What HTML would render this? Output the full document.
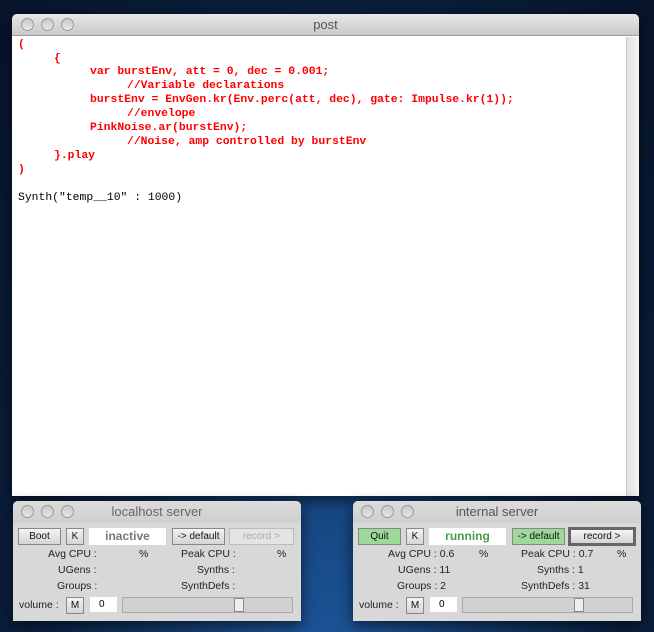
<!DOCTYPE html>
<html><head><style>
*{margin:0;padding:0;box-sizing:border-box}
body{width:654px;height:632px;overflow:hidden;position:relative;font-family:"Liberation Sans",sans-serif;
background:radial-gradient(ellipse at 50% 120%,#1f5fa8 0%,#123a6e 35%,#0b1f3d 65%,#07142a 100%);}
.win{position:absolute;background:#d8d8d8;border-radius:5px 5px 0 0;box-shadow:0 4px 14px rgba(0,0,0,.6)}
.tb{position:absolute;left:0;right:0;top:0;height:22px;border-radius:5px 5px 0 0;background:linear-gradient(#e8e8e8,#c9c9c9);border-bottom:1px solid #9a9a9a;text-align:center;font-size:13px;color:#555;line-height:22px}
.dot{position:absolute;top:4px;width:13px;height:13px;border-radius:50%;background:linear-gradient(#c8c8c8,#e8e8e8);border:1px solid #999}
.code{position:absolute;font-family:"Liberation Mono",monospace;font-size:11.4px;font-weight:bold;color:#f00;white-space:pre;line-height:14px}
.btn{position:absolute;height:17px;background:linear-gradient(#f4f4f4,#d4d4d4);border:1px solid #888;font-size:10px;text-align:center;line-height:15px;color:#111}
.lbl{position:absolute;font-size:10.5px;color:#222;white-space:pre}
</style></head><body>
<div class="win" style="left:12px;top:14px;width:627px;height:482px;background:#fff">
 <div class="tb">post</div>
 <div class="dot" style="left:9px"></div><div class="dot" style="left:29px"></div><div class="dot" style="left:49px"></div>
 <div style="position:absolute;right:0;top:23px;width:13px;bottom:0;background:linear-gradient(90deg,#e0e0e0,#f4f4f4);border-left:1px solid #ccc"></div>
</div>
<div class="code" style="left:18px;top:38px">(</div>
<div class="code" style="left:54px;top:52px">{</div>
<div class="code" style="left:90px;top:65px">var burstEnv, att = 0, dec = 0.001;</div>
<div class="code" style="left:127px;top:79px">//Variable declarations</div>
<div class="code" style="left:90px;top:93px">burstEnv = EnvGen.kr(Env.perc(att, dec), gate: Impulse.kr(1));</div>
<div class="code" style="left:127px;top:107px">//envelope</div>
<div class="code" style="left:90px;top:121px">PinkNoise.ar(burstEnv);</div>
<div class="code" style="left:127px;top:135px">//Noise, amp controlled by burstEnv</div>
<div class="code" style="left:54px;top:149px">}.play</div>
<div class="code" style="left:18px;top:163px">)</div>
<div class="code" style="left:18px;top:191px;color:#000;font-weight:normal">Synth("temp__10" : 1000)</div>

<!-- localhost -->
<div class="win" style="left:13px;top:501px;width:288px;height:120px">
 <div class="tb" style="background:linear-gradient(#dcdcdc,#cfcfcf);border-bottom:none;color:#666">localhost server</div>
 <div class="dot" style="left:8px"></div><div class="dot" style="left:28px"></div><div class="dot" style="left:48px"></div>
</div>
<div class="btn" style="left:18px;top:528px;width:43px">Boot</div>
<div class="btn" style="left:66px;top:528px;width:18px">K</div>
<div style="position:absolute;left:89px;top:528px;width:77px;height:17px;background:#fff;font-size:12px;font-weight:bold;color:#777;text-align:center;line-height:17px">inactive</div>
<div class="btn" style="left:172px;top:528px;width:53px">-&gt; default</div>
<div class="btn" style="left:229px;top:528px;width:65px;color:#aaa;background:#e4e4e4;border-color:#bbb">record &gt;</div>
<div class="lbl" style="left:48px;top:548px">Avg CPU :</div><div class="lbl" style="left:139px;top:548px">%</div>
<div class="lbl" style="left:181px;top:548px">Peak CPU :</div><div class="lbl" style="left:277px;top:548px">%</div>
<div class="lbl" style="left:58px;top:564px">UGens :</div><div class="lbl" style="left:197px;top:564px">Synths :</div>
<div class="lbl" style="left:57px;top:580px">Groups :</div><div class="lbl" style="left:181px;top:580px">SynthDefs :</div>
<div class="lbl" style="left:19px;top:599px">volume :</div>
<div class="btn" style="left:66px;top:597px;width:18px">M</div>
<div style="position:absolute;left:90px;top:597px;width:27px;height:15px;background:#fff;font-size:10px;line-height:15px;padding-left:9px">0</div>
<div style="position:absolute;left:122px;top:597px;width:171px;height:16px;border:1px solid #aaa;background:#d0d0d0"></div>
<div style="position:absolute;left:234px;top:598px;width:10px;height:14px;background:#eee;border:1px solid #888"></div>

<!-- internal -->
<div class="win" style="left:353px;top:501px;width:288px;height:120px">
 <div class="tb" style="background:linear-gradient(#dcdcdc,#cfcfcf);border-bottom:none;color:#555">internal server</div>
 <div class="dot" style="left:8px"></div><div class="dot" style="left:28px"></div><div class="dot" style="left:48px"></div>
</div>
<div class="btn" style="left:358px;top:528px;width:43px;background:#9fd99a">Quit</div>
<div class="btn" style="left:406px;top:528px;width:18px">K</div>
<div style="position:absolute;left:429px;top:528px;width:77px;height:17px;background:#fff;font-size:12px;font-weight:bold;color:#4a9a4a;text-align:center;line-height:17px">running</div>
<div class="btn" style="left:512px;top:528px;width:53px;background:#9fd99a">-&gt; default</div>
<div class="btn" style="left:568px;top:527px;width:68px;height:19px;border:3px solid #666;line-height:13px">record &gt;</div>
<div class="lbl" style="left:388px;top:548px">Avg CPU : 0.6</div><div class="lbl" style="left:479px;top:548px">%</div>
<div class="lbl" style="left:521px;top:548px">Peak CPU : 0.7</div><div class="lbl" style="left:617px;top:548px">%</div>
<div class="lbl" style="left:398px;top:564px">UGens : 11</div><div class="lbl" style="left:537px;top:564px">Synths : 1</div>
<div class="lbl" style="left:397px;top:580px">Groups : 2</div><div class="lbl" style="left:521px;top:580px">SynthDefs : 31</div>
<div class="lbl" style="left:359px;top:599px">volume :</div>
<div class="btn" style="left:406px;top:597px;width:18px">M</div>
<div style="position:absolute;left:430px;top:597px;width:27px;height:15px;background:#fff;font-size:10px;line-height:15px;padding-left:9px">0</div>
<div style="position:absolute;left:462px;top:597px;width:171px;height:16px;border:1px solid #aaa;background:#d0d0d0"></div>
<div style="position:absolute;left:574px;top:598px;width:10px;height:14px;background:#eee;border:1px solid #888"></div>
</body></html>
